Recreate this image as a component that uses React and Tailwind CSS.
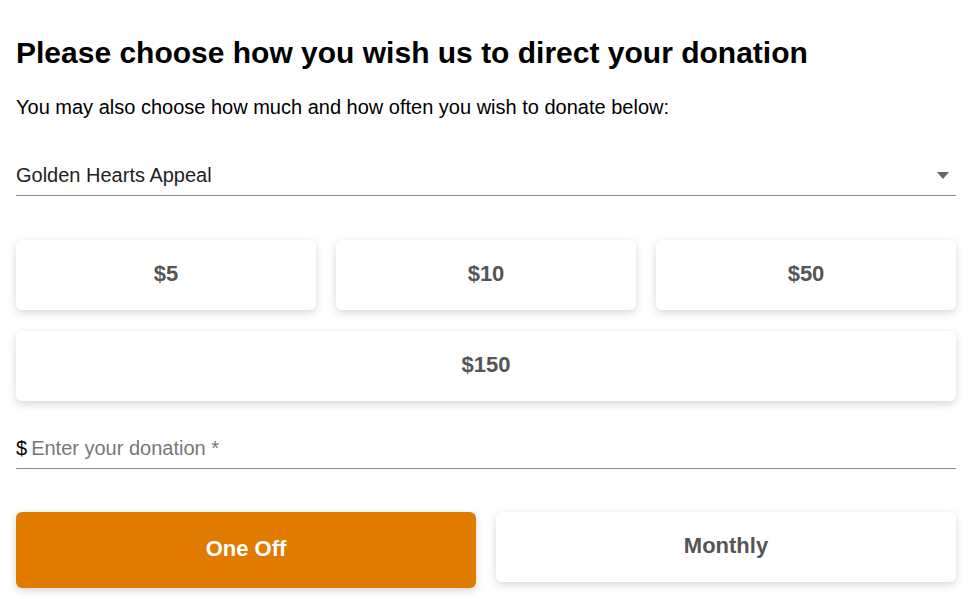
import { useState } from "react";

const amounts = ["$5", "$10", "$50"];

export default function App() {
  const [amount, setAmount] = useState(null);
  const [freq, setFreq] = useState("oneoff");

  const card =
    "flex items-center justify-center h-[70px] pb-[3px] rounded-md bg-white shadow-[0_3px_8px_rgba(0,0,0,0.16)] text-[22px] font-bold text-[#555]";

  return (
    <div className="min-h-screen bg-white font-['Liberation_Sans',Arial,sans-serif] text-black">
      <div className="pl-4 pr-[22px] pt-[35px]">
        <h1 className="text-[30px] font-bold leading-9">
          Please choose how you wish us to direct your donation
        </h1>
        <p className="mt-6 text-[20px] leading-6">
          You may also choose how much and how often you wish to donate below:
        </p>

        {/* Appeal select */}
        <div className="mt-[44px] flex items-center justify-between border-b border-[#8a8a8a] pb-2">
          <span className="text-[20px] leading-6 text-[#222]">Golden Hearts Appeal</span>
          <svg width="12" height="7" viewBox="0 0 12 7" className="mr-[7px]">
            <path d="M0 0h12L6 7z" fill="#666" />
          </svg>
        </div>

        {/* Amounts */}
        <div className="mt-[44px] grid grid-cols-3 gap-x-5 gap-y-[21px]">
          {amounts.map((a) => (
            <button key={a} className={card} onClick={() => setAmount(a)}>
              {a}
            </button>
          ))}
          <button className={`${card} col-span-3`} onClick={() => setAmount("$150")}>
            $150
          </button>
        </div>

        {/* Custom amount */}
        <div className="mt-[35px] flex items-center border-b border-[#8a8a8a] pb-[8px] text-[20px] leading-6">
          <span className="mr-1">$</span>
          <span className="text-[#777]">Enter your donation *</span>
        </div>

        {/* Frequency */}
        <div className="mt-[43px] grid grid-cols-2 gap-5 items-start">
          <button
            onClick={() => setFreq("oneoff")}
            className="flex h-[76px] pb-1 items-center justify-center rounded-md bg-[#e07b00] text-[22px] font-bold text-white shadow-[0_3px_8px_rgba(0,0,0,0.16)]"
          >
            One Off
          </button>
          <button onClick={() => setFreq("monthly")} className={card}>
            Monthly
          </button>
        </div>
      </div>
    </div>
  );
}
